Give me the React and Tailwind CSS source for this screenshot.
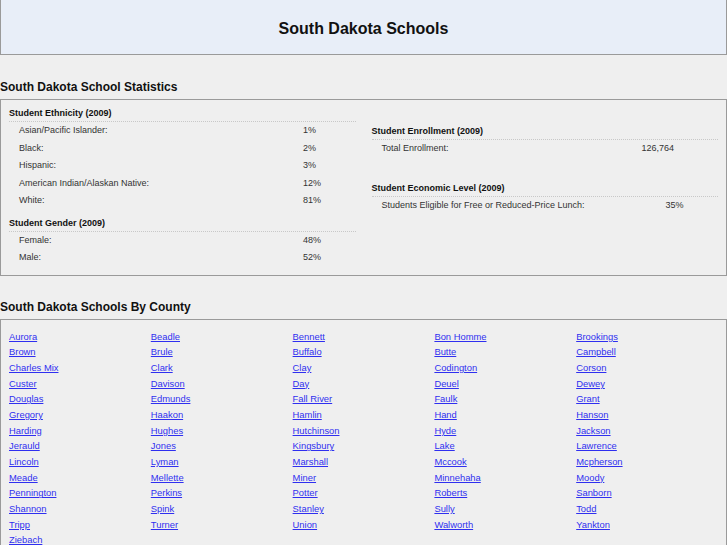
const ethnicity = [
  ['Asian/Pacific Islander:', '1%'],
  ['Black:', '2%'],
  ['Hispanic:', '3%'],
  ['American Indian/Alaskan Native:', '12%'],
  ['White:', '81%'],
];

const gender = [
  ['Female:', '48%'],
  ['Male:', '52%'],
];

const counties = [
  'Aurora', 'Beadle', 'Bennett', 'Bon Homme', 'Brookings',
  'Brown', 'Brule', 'Buffalo', 'Butte', 'Campbell',
  'Charles Mix', 'Clark', 'Clay', 'Codington', 'Corson',
  'Custer', 'Davison', 'Day', 'Deuel', 'Dewey',
  'Douglas', 'Edmunds', 'Fall River', 'Faulk', 'Grant',
  'Gregory', 'Haakon', 'Hamlin', 'Hand', 'Hanson',
  'Harding', 'Hughes', 'Hutchinson', 'Hyde', 'Jackson',
  'Jerauld', 'Jones', 'Kingsbury', 'Lake', 'Lawrence',
  'Lincoln', 'Lyman', 'Marshall', 'Mccook', 'Mcpherson',
  'Meade', 'Mellette', 'Miner', 'Minnehaha', 'Moody',
  'Pennington', 'Perkins', 'Potter', 'Roberts', 'Sanborn',
  'Shannon', 'Spink', 'Stanley', 'Sully', 'Todd',
  'Tripp', 'Turner', 'Union', 'Walworth', 'Yankton',
  'Ziebach',
];

function StatHeader({ children }) {
  return (
    <div className="pt-[8px] pb-[3px] border-b border-dotted border-[#c8c8c8] text-[9px] leading-[10px] font-bold text-[#111]">
      {children}
    </div>
  );
}

function StatRow({ label, value, labelWidth }) {
  return (
    <div className="flex h-[17.5px] items-center pl-[10px] text-[9px] text-[#333]">
      <div className={labelWidth}>{label}</div>
      <div>{value}</div>
    </div>
  );
}

export default function App() {
  return (
    <div className="min-h-screen bg-[#efefef] font-['Liberation_Sans',Arial,sans-serif] text-[#111]">
      {/* Page title */}
      <div className="h-[55px] pt-[3px] bg-[#e8eef8] border-x border-b border-[#9a9a9a] flex items-center justify-center">
        <h1 className="text-[16px] font-bold leading-none">South Dakota Schools</h1>
      </div>

      {/* Statistics */}
      <h2 className="mt-[25px] mb-[5px] text-[12px] leading-[14px] font-bold">South Dakota School Statistics</h2>
      <div className="border border-[#9a9a9a] px-[8px] pb-[8px] grid grid-cols-2 gap-[16px]">
        <div>
          <StatHeader>Student Ethnicity (2009)</StatHeader>
          {ethnicity.map(([label, value]) => (
            <StatRow key={label} label={label} value={value} labelWidth="w-[284px]" />
          ))}
          <StatHeader>Student Gender (2009)</StatHeader>
          {gender.map(([label, value]) => (
            <StatRow key={label} label={label} value={value} labelWidth="w-[284px]" />
          ))}
        </div>
        <div>
          <div className="mt-[18px]">
            <StatHeader>Student Enrollment (2009)</StatHeader>
            <StatRow label="Total Enrollment:" value="126,764" labelWidth="w-[260px]" />
          </div>
          <div className="mt-[17.5px]">
            <StatHeader>Student Economic Level (2009)</StatHeader>
            <StatRow label="Students Eligible for Free or Reduced-Price Lunch:" value="35%" labelWidth="w-[284px]" />
          </div>
        </div>
      </div>

      {/* Counties */}
      <h2 className="mt-[24px] mb-[5px] text-[12px] leading-[14px] font-bold">South Dakota Schools By County</h2>
      <div className="border border-[#9a9a9a] px-[8px] pt-[7px] pb-[8px] grid grid-cols-5 auto-rows-[15.7px]">
        {counties.map((name) => (
          <div key={name} className="leading-[15.7px]">
            <a href="#" className="text-[9.4px] text-[#2f2ff0] underline">{name}</a>
          </div>
        ))}
      </div>
    </div>
  );
}
